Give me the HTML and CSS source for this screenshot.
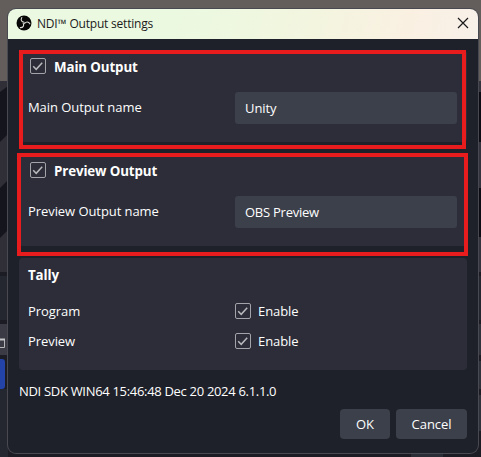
FILE: index.html
```html
<!DOCTYPE html>
<html lang="en">
<head>
<meta charset="utf-8">
<title>NDI™ Output settings</title>
<link rel="stylesheet" href="styles.css">
</head>
<body>
<svg class="backdrop" width="481" height="457" viewBox="0 0 481 457" aria-hidden="true">
  <rect width="481" height="457" fill="#1b1c24"/>
  <rect width="481" height="81" fill="#635e5b"/>
  <rect y="81" width="8" height="191" fill="#15151e"/>
  <path d="M0 81h8v5L0 92zM0 142l8-8v46L0 188zM0 238l8-8v42H0z" fill="#302f38"/>
  <path d="M0 276h8v44H0zM0 389h8v68H0z" fill="#242730"/>
  <path d="M0 324h8v31H0z" fill="#3a3b44"/>
  <path d="M0 347.500h4.500v-8" fill="none" stroke="#b5b5b8"/>
  <path d="M0 339.500h5" stroke="#c5c5c8" stroke-width="2"/>
  <path d="M0 359h2q3 0 3 3v24q0 3-3 3H0z" fill="#2443a8"/>
  <path d="M478 81h3v11h-3zM478 142h3v46h-3zM478 237h3v35h-3z" fill="#33343d"/>
  <path d="M478 92h3v50h-3zM478 188h3v49h-3z" fill="#0c0c14"/>
  <path d="M478 276h3v44h-3z" fill="#242730"/>
  <path d="M478 324h3v31h-3zM478 361h3v28h-3zM478 395h3v36h-3z" fill="#2f323b"/>
  <path d="M411 453h32v4h-32z" fill="#2c2e37"/>
</svg>

<main class="dialog">
  <header class="titlebar">
    <svg class="logo" width="16" height="16" viewBox="0 0 16 16" aria-hidden="true">
      <circle cx="8" cy="8" r="7.500" fill="#080808"/>
      <g fill="none" stroke="#d9ded5" stroke-width="1.100" stroke-linecap="round">
        <path id="blade" d="M5.800 2.500C4.300 4.900 5.600 7.100 8.200 7.200"/>
        <use href="#blade" transform="rotate(120 8 8)"/>
        <use href="#blade" transform="rotate(240 8 8)"/>
      </g>
    </svg>
    <h1 class="title">NDI™ Output settings</h1>
    <svg class="close" width="12" height="12" viewBox="0 0 12 12" aria-label="Close"><path d="M1 1l10 10M11 1L1 11" stroke="#1b1b1b" stroke-width="1.200" fill="none"/></svg>
  </header>

  <div class="content">
    <section class="panel output">
      <div class="heading"><span class="check"><svg width="16" height="16" viewBox="0 0 16 16"><path d="M3.200 8.300l3 3 6-6.600"/></svg></span><h2>Main Output</h2></div>
      <div class="field"><label>Main Output name</label><div class="input">Unity</div></div>
    </section>
    <section class="panel output">
      <div class="heading"><span class="check"><svg width="16" height="16" viewBox="0 0 16 16"><path d="M3.200 8.300l3 3 6-6.600"/></svg></span><h2>Preview Output</h2></div>
      <div class="field"><label>Preview Output name</label><div class="input narrow">OBS Preview</div></div>
    </section>
    <section class="panel tally">
      <h2>Tally</h2>
      <div class="row"><span class="name">Program</span><span class="check"><svg width="16" height="16" viewBox="0 0 16 16"><path d="M3.200 8.300l3 3 6-6.600"/></svg></span><span class="enable">Enable</span></div>
      <div class="row"><span class="name">Preview</span><span class="check"><svg width="16" height="16" viewBox="0 0 16 16"><path d="M3.200 8.300l3 3 6-6.600"/></svg></span><span class="enable">Enable</span></div>
    </section>
    <p class="version">NDI SDK WIN64 15:46:48 Dec 20 2024 6.1.1.0</p>
    <footer class="actions"><div class="button ok">OK</div><div class="button cancel">Cancel</div></footer>
  </div>
</main>
<div class="highlight main-mark"></div>
<div class="highlight preview-mark"></div>
</body>
</html>
```
FILE: styles.css
```css
* { box-sizing: border-box; margin: 0; padding: 0; }
body {
  width: 481px;
  height: 457px;
  padding: 9px 0 0 8px;
  overflow: hidden;
  position: relative;
  background: #1b1c24;
  color: #fefefe;
  font: 13px/18px "Open Sans", "Noto Sans", sans-serif;
  letter-spacing: -0.07px;
  white-space: nowrap;
}
.backdrop { position: absolute; left: 0; top: 0; }
.dialog {
  position: relative;
  width: 470px;
  height: 444px;
  border-radius: 8px;
  background: #1f212a;
  box-shadow: 0 0 0 1px #484951;
  overflow: hidden;
}
.titlebar {
  height: 30px;
  display: flex;
  align-items: center;
  padding: 0 9px 2px 8px;
  background: linear-gradient(105deg, #ebf9e2 0%, #ebf9e0 35%, #f3f5df 65%, #faf0e2 85%, #f8f1e9 100%);
  color: #1b1b1b;
}
.title { margin: 1px 0 0 5px; font-size: 12px; font-weight: 400; letter-spacing: -0.2px; }
.close { margin-left: auto; }
.content { padding: 11px 11px 0; }
.panel { border-radius: 4px; background: #2c2d38; padding: 0 10px 0 9px; }
.output { height: 92px; margin-bottom: 12px; }
h2 { font-size: 13.33px; line-height: 18px; font-weight: 700; letter-spacing: -0.12px; }
.heading { display: flex; align-items: center; height: 42px; padding: 0 0 10px 2px; }
.heading h2 { margin: 2px 0 0 8px; }
.check {
  width: 16px;
  height: 16px;
  border: 1px solid #a3a4a9;
  border-radius: 2px;
  flex: none;
}
.check svg { display: block; margin: -1px; fill: none; stroke: #b8b9bd; stroke-width: 1.5; }
.field { display: grid; grid-template-columns: 207px 222px; align-items: center; }
.field label { margin-top: -2px; }
.input { height: 32px; padding: 7px 10px 0; border-radius: 3px; background: #3c404a; }
.narrow { letter-spacing: -0.25px; }
.tally { height: 112px; padding-top: 8px; }
.tally h2 { margin-bottom: 12px; }
.row { display: grid; grid-template-columns: 207px 16px 1fr; align-items: center; height: 30px; }
.enable { margin-left: 7px; }
.version { margin-top: 12px; letter-spacing: -0.31px; }
.actions { display: flex; justify-content: flex-end; gap: 6px; margin-top: 9px; }
.button { height: 30px; border-radius: 4px; background: #3c404a; text-align: center; line-height: 30px; }
.ok { width: 50px; }
.cancel { width: 71px; }
.highlight { position: absolute; border: 4px solid #e81c1c; }
.main-mark { left: 19px; top: 50px; width: 447px; height: 99px; }
.preview-mark { left: 17px; top: 153px; width: 451px; height: 103px; }
```
